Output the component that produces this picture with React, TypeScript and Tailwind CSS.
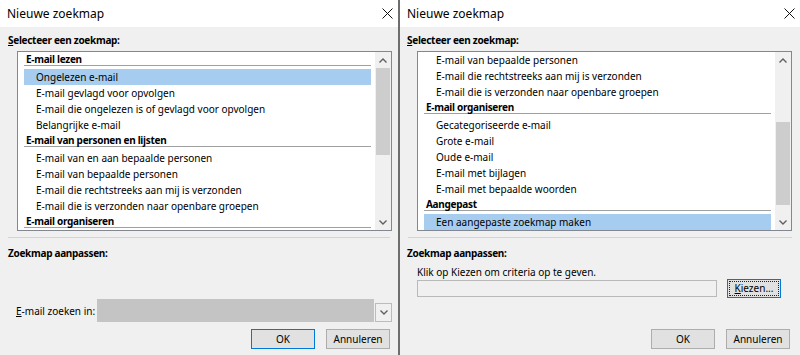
import React from "react";

type Row = { t: string; h?: boolean; sel?: boolean };

const leftRows: Row[] = [
  { t: "E-mail lezen", h: true },
  { t: "Ongelezen e-mail", sel: true },
  { t: "E-mail gevlagd voor opvolgen" },
  { t: "E-mail die ongelezen is of gevlagd voor opvolgen" },
  { t: "Belangrijke e-mail" },
  { t: "E-mail van personen en lijsten", h: true },
  { t: "E-mail van en aan bepaalde personen" },
  { t: "E-mail van bepaalde personen" },
  { t: "E-mail die rechtstreeks aan mij is verzonden" },
  { t: "E-mail die is verzonden naar openbare groepen" },
  { t: "E-mail organiseren", h: true },
  { t: "Gecategoriseerde e-mail" },
];

const rightRows: Row[] = [
  { t: "E-mail van bepaalde personen" },
  { t: "E-mail die rechtstreeks aan mij is verzonden" },
  { t: "E-mail die is verzonden naar openbare groepen" },
  { t: "E-mail organiseren", h: true },
  { t: "Gecategoriseerde e-mail" },
  { t: "Grote e-mail" },
  { t: "Oude e-mail" },
  { t: "E-mail met bijlagen" },
  { t: "E-mail met bepaalde woorden" },
  { t: "Aangepast", h: true },
  { t: "Een aangepaste zoekmap maken", sel: true },
];

function Chevron({ up }: { up?: boolean }) {
  return (
    <svg width="8" height="5" viewBox="0 0 8 5">
      <polyline
        points={up ? "0.5,4.5 4,1 7.5,4.5" : "0.5,0.5 4,4 7.5,0.5"}
        fill="none"
        stroke="#606060"
        strokeWidth="1.4"
      />
    </svg>
  );
}

function CloseX() {
  return (
    <svg width="11" height="11" viewBox="0 0 11 11">
      <path d="M0.5 0.5 L10.5 10.5 M10.5 0.5 L0.5 10.5" stroke="#111" strokeWidth="1" />
    </svg>
  );
}

function ListBox({ rows, thumbTop, thumbH }: { rows: Row[]; thumbTop: number; thumbH: number }) {
  return (
    <div className="ml-[17px] mt-[4px] w-[375px] h-[180px] border border-[#828790] bg-white flex overflow-hidden">
      <div className="flex-1 pl-[6px] pr-[4px] overflow-hidden">
        {rows.map((r, i) =>
          r.h ? (
            <div key={i} className="h-[17px]">
              <div className="h-[14px] leading-[14px] pl-[2px] font-bold tracking-[-0.3px] border-b border-[#a0a0a0]">
                {r.t}
              </div>
            </div>
          ) : (
            <div
              key={i}
              className={`h-[16px] leading-[16px] pl-[12px] whitespace-nowrap ${r.sel ? "bg-[#a6cdf0]" : ""}`}
            >
              {r.t}
            </div>
          )
        )}
      </div>
      <div className="w-[16px] bg-[#f0f0f0] flex flex-col">
        <div className="h-[16px] flex items-center justify-center">
          <Chevron up />
        </div>
        <div className="flex-1 relative">
          <div className="absolute left-[1px] right-[1px] bg-[#cdcdcd]" style={{ top: thumbTop, height: thumbH }} />
        </div>
        <div className="h-[16px] flex items-center justify-center">
          <Chevron />
        </div>
      </div>
    </div>
  );
}

function Btn({ children, def, w = 64 }: { children: React.ReactNode; def?: boolean; w?: number }) {
  return (
    <div
      className={`h-[20px] flex items-center justify-center bg-[#e1e1e1] border ${def ? "border-[#0078d7]" : "border-[#adadad]"}`}
      style={{ width: w }}
    >
      {children}
    </div>
  );
}

function TitleBar() {
  return (
    <div className="h-[27px] bg-white flex items-center justify-between pl-[7px] pr-[5px]">
      <span className="text-[12px]">Nieuwe zoekmap</span>
      <CloseX />
    </div>
  );
}

function LeftDialog() {
  return (
    <div className="w-[398px] h-[355px] flex flex-col bg-[#f0f0f0]">
      <TitleBar />
      <div className="pt-[6px] pl-[8px] h-[14px] leading-[14px] box-content font-bold tracking-[-0.3px]">
        <span className="underline">S</span>electeer een zoekmap:
      </div>
      <ListBox rows={leftRows} thumbTop={0} thumbH={87} />
      <div className="mt-[6px] mx-[8px] h-px bg-[#d3d3d3]" />
      <div className="mt-[8px] pl-[8px] h-[14px] leading-[14px] font-bold tracking-[-0.3px]">Zoekmap aanpassen:</div>
      <div className="mt-[39px] flex items-end h-[23px]">
        <div className="w-[97px] shrink-0 pl-[16px] self-center leading-[14px] whitespace-nowrap">
          <span className="underline">E</span>-mail zoeken in:
        </div>
        <div className="w-[277px] shrink-0 h-[23px] bg-[#c4c4c4]" />
        <div className="ml-[1px] w-[17px] shrink-0 h-[19px] border border-[#bcbcbc] bg-[#f0f0f0] flex items-center justify-center">
          <Chevron />
        </div>
      </div>
      <div className="mt-[7px] flex justify-end gap-[11px] pr-[8px]">
        <Btn def>OK</Btn>
        <Btn>Annuleren</Btn>
      </div>
    </div>
  );
}

function RightDialog() {
  return (
    <div className="w-[400px] h-[355px] flex flex-col bg-[#f0f0f0]">
      <TitleBar />
      <div className="pt-[6px] pl-[7px] h-[14px] leading-[14px] box-content font-bold tracking-[-0.3px]">
        <span className="underline">S</span>electeer een zoekmap:
      </div>
      <ListBox rows={rightRows} thumbTop={54} thumbH={83} />
      <div className="mt-[6px] mx-[8px] h-px bg-[#d3d3d3]" />
      <div className="mt-[8px] pl-[7px] h-[14px] leading-[14px] font-bold tracking-[-0.3px]">Zoekmap aanpassen:</div>
      <div className="mt-[5px] pl-[17px] h-[14px] leading-[14px]">Klik op Kiezen om criteria op te geven.</div>
      <div className="flex items-center h-[19px] pl-[17px]">
        <div className="w-[300px] shrink-0 h-[17px] border border-[#b9b9b9] bg-[#f0f0f0]" />
        <div className="ml-[10px] w-[54px] shrink-0 h-[19px] border border-[#0078d7] bg-[#e1e1e1] p-[1px]">
          <div className="w-full h-full border border-dotted border-[#222] flex items-center justify-center leading-[13px]">
            <span>
              <span className="underline">K</span>iezen...
            </span>
          </div>
        </div>
      </div>
      <div className="mt-[31px] flex justify-end gap-[11px] pr-[10px]">
        <Btn>OK</Btn>
        <Btn>Annuleren</Btn>
      </div>
    </div>
  );
}

export default function App() {
  return (
    <div className="w-[800px] h-[355px] flex overflow-hidden text-[10px] text-black font-['Noto_Sans',sans-serif]">
      <LeftDialog />
      <div className="w-[2px] h-full bg-[#6e6e6e]" />
      <RightDialog />
    </div>
  );
}
